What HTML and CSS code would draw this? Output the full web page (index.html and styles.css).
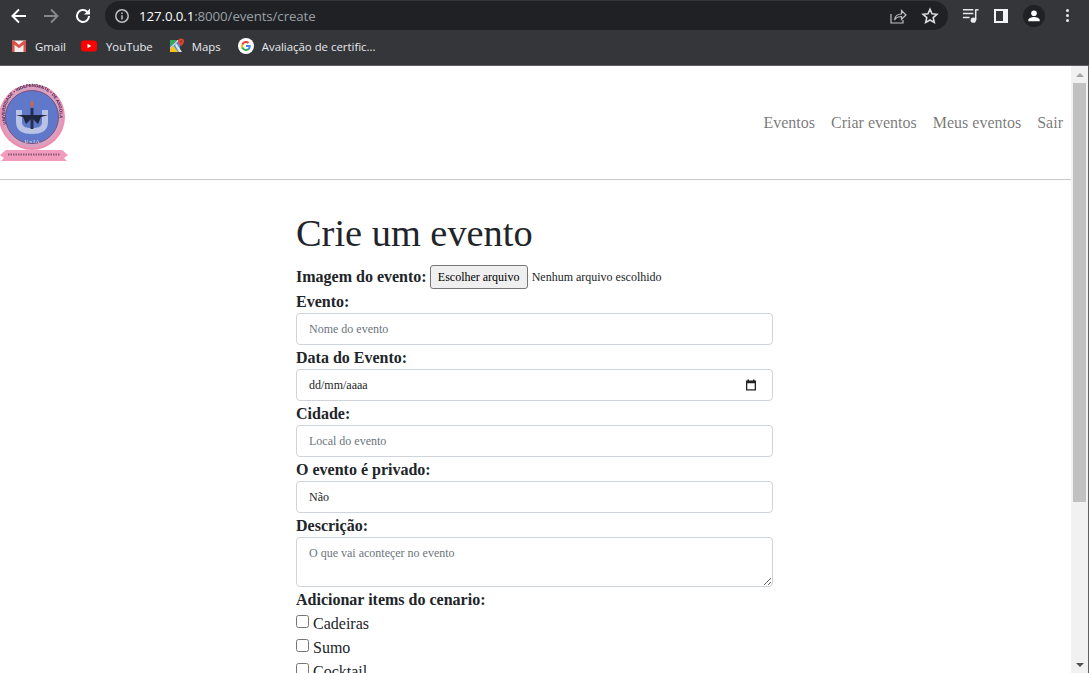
FILE: index.html
```html
<!DOCTYPE html>
<html lang="pt-BR">
<head>
    <meta charset="UTF-8">
    <meta name="viewport" content="width=device-width, initial-scale=1.0">
    <title>Crie um evento</title>
    <link rel="stylesheet" href="styles.css">
</head>
<body>
    <div id="browser-bar">
        <div id="toolbar">
            <svg class="tool-icon" viewBox="0 0 20 20"><path d="M17 10H4M10 3.500L3.500 10l6.500 6.500" fill="none" stroke="#fff" stroke-width="2"/></svg>
            <svg class="tool-icon forward" viewBox="0 0 20 20"><path d="M3 10h13M10 3.500l6.500 6.500-6.500 6.500" fill="none" stroke="#85878a" stroke-width="2"/></svg>
            <svg class="tool-icon reload" viewBox="0 0 20 20"><path d="M16 10a6 6 0 1 1-1.800-4.300" fill="none" stroke="#fff" stroke-width="2"/><path d="M17 2.500V8.500H11z" fill="#fff"/></svg>
            <div id="address">
                <svg class="info-icon" viewBox="0 0 16 16"><circle cx="8" cy="8" r="6.200" fill="none" stroke="#bdc1c6" stroke-width="1.500"/><path d="M8 7.200v4.300M8 4.400v1.500" stroke="#bdc1c6" stroke-width="1.500"/></svg>
                <span class="url"><b>127.0.0.1</b>:8000/events/create</span>
                <svg class="addr-icon share" viewBox="0 0 18 18"><path d="M2 7v9h12v-3" fill="none" stroke="#bdc1c6" stroke-width="1.200"/><path d="M5.500 13c.5-4 3-6 7-6V3.500L17 8l-4.500 4.300V9.500c-3 0-5.300 1-7 3.500z" fill="none" stroke="#bdc1c6" stroke-width="1.200"/></svg>
                <svg class="addr-icon" viewBox="0 0 18 18"><path d="M9 2.300l2 4.500 4.900.5-3.700 3.300 1.100 4.800L9 13l-4.300 2.400 1.100-4.800-3.700-3.300 4.900-.5z" fill="none" stroke="#dcdde0" stroke-width="1.600"/></svg>
            </div>
            <svg class="ext-icon media" viewBox="0 0 18 18"><path d="M1 3h11M1 7h11M1 11h7" stroke="#e8eaed" stroke-width="1.600"/><path d="M14.500 3v11" stroke="#e8eaed" stroke-width="1.600"/><path d="M14 3h3.500" stroke="#e8eaed" stroke-width="1.600"/><circle cx="12" cy="14" r="2.800" fill="#e8eaed"/></svg>
            <svg class="ext-icon panel" viewBox="0 0 14 14"><path fill-rule="evenodd" d="M0 0h14v14H0zM2 2v10h7V2z" fill="#f1f3f4"/></svg>
            <div id="avatar"><svg viewBox="0 0 16 16"><circle cx="8" cy="4.800" r="3.200" fill="#fff"/><path d="M1.500 14v-1.500c0-2.200 4-3.400 6.500-3.400s6.500 1.200 6.500 3.400V14z" fill="#fff"/></svg></div>
            <div id="menu-dots"><i></i><i></i><i></i></div>
        </div>
        <div id="bookmarks">
            <div class="bookmark gmail">
                <svg viewBox="0 0 16 16"><path d="M1 2.500h14v11.500H1z" fill="#f4eeee"/><path d="M1 14V2.500h2l5 4.300 5-4.300h2V14h-2.500V6.800L8 10.300 3.500 6.800V14z" fill="#d9534a"/></svg>
                <span>Gmail</span>
            </div>
            <div class="bookmark youtube">
                <svg viewBox="0 0 16 16"><rect x="0" y="2.500" width="16" height="11" rx="3" fill="#f00"/><path d="M6.500 5.800v4.400L10.300 8z" fill="#fff"/></svg>
                <span>YouTube</span>
            </div>
            <div class="bookmark maps">
                <svg viewBox="0 0 16 16"><path d="M1 2h10v12H1z" fill="#4a90d9"/><path d="M1 2h7L1 9z" fill="#35a853"/><path d="M1 9.800L8.800 2h1.500L1 11.300z" fill="#e8e4d0"/><path d="M1 11.300l3.500-3.500L9 14H1z" fill="#f5c518"/><path d="M6 7l1.500-1.500L13 14h-3z" fill="#dfe3e6"/><path d="M12 .5a3 3 0 0 1 3 3c0 2-3 4.800-3 4.800S9 5.500 9 3.500a3 3 0 0 1 3-3z" fill="#db4437"/><circle cx="12" cy="3.500" r="1" fill="#8f2a22"/></svg>
                <span>Maps</span>
            </div>
            <div class="bookmark google">
                <svg viewBox="0 0 18 18"><circle cx="9" cy="9" r="9" fill="#fff"/><path d="M14.300 9.200c0-.4 0-.8-.1-1.200H9v2.200h3a2.600 2.600 0 0 1-1.100 1.700l1.800 1.400c1-1 1.600-2.400 1.600-4.100z" fill="#4285f4"/><path d="M9 14.500c1.500 0 2.700-.5 3.700-1.300l-1.800-1.400c-.5.300-1.100.5-1.900.5-1.400 0-2.700-1-3.100-2.300H4v1.400a5.500 5.500 0 0 0 5 3.100z" fill="#34a853"/><path d="M5.900 10a3.300 3.300 0 0 1 0-2.100V6.500H4a5.500 5.500 0 0 0 0 4.900z" fill="#fbbc05"/><path d="M9 5.600c.8 0 1.500.3 2.100.8l1.600-1.600A5.500 5.500 0 0 0 4 6.500l1.900 1.400C6.300 6.600 7.600 5.600 9 5.600z" fill="#ea4335"/></svg>
                <span>Avaliação de certific...</span>
            </div>
        </div>
    </div>

    <div id="viewport">
        <div id="page">
            <header id="navbar">
                <svg id="logo" viewBox="0 0 68 80">
                    <defs><path id="ring-path" d="M6.500 41A27.500 27.500 0 1 1 58 41"/></defs>
                    <circle cx="32" cy="34" r="33" fill="#ee8fb0"/>
                    <circle cx="32" cy="34" r="30.500" fill="#d9a0c0"/>
                    <circle cx="32" cy="34" r="26.500" fill="#5f78c9" stroke="#7c4f7c" stroke-width="1"/>
                    <text class="logo-ring"><textPath href="#ring-path">UNIVERSIDADE • INDEPENDENTE • DE ANGOLA</textPath></text>
                    <path d="M16 27v12c0 9 7 12 16 12s16-3 16-12V27h-6v12c0 5-4 6-10 6s-10-1-10-6V27z" fill="#b9c3e6"/>
                    <path d="M32 17c2 3 2 5 0 8-2-3-2-5 0-8z" fill="#d9663a"/>
                    <path d="M30.500 25h3v21h-3z" fill="#27304f"/>
                    <path d="M16 32h32l-7 2-3 7-6-6-6 6-3-7z" fill="#1f2640"/>
                    <text class="logo-initials" x="32" y="60">U n I A</text>
                    <path d="M0 72l6-5 56 0 6 5-4 3 3 3H1l3-3z" fill="#f29bbd"/>
                    <path d="M8 71.500h52" stroke="#8a5a7a" stroke-width="2" stroke-dasharray="1.500 1"/>
                </svg>
                <nav id="nav-links">
                    <a href="#">Eventos</a>
                    <a href="#">Criar eventos</a>
                    <a href="#">Meus eventos</a>
                    <a href="#">Sair</a>
                </nav>
            </header>

            <main id="form-container">
                <h1>Crie um evento</h1>
                <form>
                    <div class="form-group file-row">
                        <label for="image">Imagem do evento:</label>
                        <button type="button" class="file-button" id="image">Escolher arquivo</button>
                        <span class="file-name">Nenhum arquivo escolhido</span>
                    </div>
                    <div class="form-group">
                        <label for="title">Evento:</label>
                        <input type="text" class="form-control" id="title" placeholder="Nome do evento">
                    </div>
                    <div class="form-group">
                        <label for="date">Data do Evento:</label>
                        <div class="form-control date-control">
                            <span>dd/mm/aaaa</span>
                            <svg viewBox="0 0 12 12"><path fill-rule="evenodd" d="M1 1.500H2.500V.5H4v1h4v-1h1.500v1H11V11.500H1zM2.300 4.200V10.200H9.700V4.200z" fill="#222"/></svg>
                        </div>
                    </div>
                    <div class="form-group">
                        <label for="city">Cidade:</label>
                        <input type="text" class="form-control" id="city" placeholder="Local do evento">
                    </div>
                    <div class="form-group">
                        <label for="private">O evento é privado:</label>
                        <div class="form-control select-control" id="private">Não</div>
                    </div>
                    <div class="form-group">
                        <label for="description">Descrição:</label>
                        <textarea class="form-control" id="description" placeholder="O que vai aconteçer no evento"></textarea>
                    </div>
                    <div class="form-group">
                        <label>Adicionar items do cenario:</label>
                        <div class="check-row"><input type="checkbox" id="chairs"><span>Cadeiras</span></div>
                        <div class="check-row"><input type="checkbox" id="juice"><span>Sumo</span></div>
                        <div class="check-row"><input type="checkbox" id="cocktail"><span>Cocktail</span></div>
                    </div>
                </form>
            </main>
        </div>

        <div id="scrollbar">
            <div class="arrow up"></div>
            <div id="thumb-track"><div id="thumb"></div></div>
            <div class="arrow down"></div>
        </div>
    </div>
</body>
</html>
```

FILE: styles.css
```css
/* base */
html, body {
    height: 100%;
    margin: 0;
    overflow: hidden;
}

body {
    display: flex;
    flex-direction: column;
    background-color: #fff;
    color: #212529;
    font-family: "Liberation Serif", "Times New Roman", serif;
    font-size: 16px;
}

/* browser chrome */
#browser-bar {
    flex: none;
    height: 66px;
    box-sizing: border-box;
    background-color: #35363a;
    border-bottom: 1px solid #5f6063;
    font-family: "Open Sans", "Noto Sans", sans-serif;
    color: #e8eaed;
}

#toolbar {
    display: flex;
    align-items: center;
    height: 31px;
    padding-left: 9px;
}

.tool-icon {
    width: 20px;
    height: 20px;
    flex: none;
}

.forward {
    margin-left: 12px;
}

.reload {
    margin-left: 12px;
}

#address {
    display: flex;
    align-items: center;
    width: 843px;
    height: 29px;
    margin-left: 12px;
    padding: 0 9px 0 9px;
    box-sizing: border-box;
    background-color: #202124;
    border-radius: 15px;
    flex: none;
}

.info-icon {
    width: 16px;
    height: 16px;
    flex: none;
}

.url {
    flex: 1;
    margin-left: 9px;
    font-size: 13.3px;
    letter-spacing: -0.1px;
    color: #9aa0a6;
}

.url b {
    font-weight: 400;
    color: #fff;
}

.addr-icon {
    width: 18px;
    height: 18px;
    flex: none;
    margin-left: 14px;
}

.ext-icon {
    flex: none;
}

.media {
    width: 17px;
    height: 17px;
    margin-left: 14px;
}

.panel {
    width: 14px;
    height: 14px;
    margin-left: 15px;
}

#avatar {
    display: flex;
    align-items: center;
    justify-content: center;
    flex: none;
    width: 22px;
    height: 22px;
    margin-left: 15px;
    background-color: #202124;
    border-radius: 50%;
}

#avatar svg {
    width: 14px;
    height: 14px;
}

#menu-dots {
    display: flex;
    flex-direction: column;
    gap: 2px;
    margin-left: 21px;
}

#menu-dots i {
    display: block;
    width: 3px;
    height: 3px;
    background-color: #e8eaed;
    border-radius: 50%;
}

#bookmarks {
    display: flex;
    align-items: center;
    height: 30px;
    padding-left: 11px;
    font-size: 11.4px;
}

.bookmark {
    display: flex;
    align-items: center;
    gap: 8px;
}

.bookmark svg {
    width: 16px;
    height: 16px;
    flex: none;
}

.youtube {
    margin-left: 15px;
    gap: 9px;
}

.maps {
    margin-left: 16px;
    gap: 7px;
}

.google {
    margin-left: 17px;
}

/* page */
#viewport {
    flex: 1;
    display: flex;
    min-height: 0;
}

#page {
    flex: 1;
    min-width: 0;
    overflow: hidden;
}

#navbar {
    display: flex;
    align-items: center;
    justify-content: space-between;
    height: 114px;
    box-sizing: border-box;
    padding-right: 0;
    border-bottom: 1px solid #c9c9c9;
}

#logo {
    width: 68px;
    height: 80px;
    flex: none;
    margin-top: 1px;
    filter: blur(0.5px);
}

.logo-ring {
    font-family: "Liberation Sans", sans-serif;
    font-size: 4.3px;
    font-weight: 700;
    fill: #3a2a55;
}

.logo-initials {
    font-family: "Liberation Serif", serif;
    font-size: 5px;
    fill: #e8e8f0;
    text-anchor: middle;
}

#nav-links {
    display: flex;
}

#nav-links a {
    padding: 8px;
    color: rgba(0, 0, 0, 0.55);
    text-decoration: none;
}

#form-container {
    width: 477px;
    margin-left: 296px;
    padding-top: 29px;
}

h1 {
    margin: 0 0 8px;
    font-size: 38.4px;
    font-weight: 400;
    line-height: 48px;
}

.form-group label {
    display: block;
    height: 23px;
    padding-top: 1px;
    font-weight: 700;
    line-height: 24px;
}

.file-row {
    display: flex;
    align-items: center;
}

.file-row label {
    height: 24px;
    padding-top: 0;
    margin-right: 3px;
}

.file-button {
    flex: none;
    width: 98px;
    height: 24px;
    padding: 0;
    background-color: #efefef;
    border: 1px solid #767676;
    border-radius: 3px;
    color: #000;
    font-family: inherit;
    font-size: 12px;
}

.file-name {
    margin-left: 4px;
    color: #212529;
    font-size: 12px;
}

.form-control {
    display: block;
    width: 100%;
    height: 32px;
    box-sizing: border-box;
    padding: 6px 12px;
    background-color: #fff;
    border: 1px solid #ced4da;
    border-radius: 4px;
    color: #212529;
    font-family: inherit;
    font-size: 12px;
    line-height: 18px;
    outline: none;
}

.form-control::placeholder {
    color: #6c757d;
}

.date-control {
    display: flex;
    align-items: center;
    justify-content: space-between;
    padding-right: 15px;
}

.date-control svg {
    width: 12px;
    height: 12px;
}

textarea.form-control {
    height: 50px;
}

.check-row {
    display: flex;
    align-items: center;
    height: 24px;
}

.check-row input {
    width: 13px;
    height: 13px;
    margin: -3px 4px 0 0;
}

.check-row span {
    padding-top: 2px;
}

/* scrollbar */
#scrollbar {
    flex: none;
    display: flex;
    flex-direction: column;
    width: 18px;
    box-sizing: border-box;
    background-color: #f1f1f1;
    border-right: 1px solid #5f6063;
}

.arrow {
    flex: none;
    height: 17px;
    display: flex;
    align-items: center;
    justify-content: center;
}

.arrow::before {
    content: "";
    border-left: 4px solid transparent;
    border-right: 4px solid transparent;
}

.up::before {
    border-bottom: 4px solid #a3a3a3;
}

.down::before {
    border-top: 4px solid #505050;
}

#thumb-track {
    flex: 1;
}

#thumb {
    width: 13px;
    height: 419px;
    margin-left: 2px;
    background-color: #c1c1c1;
}
```
